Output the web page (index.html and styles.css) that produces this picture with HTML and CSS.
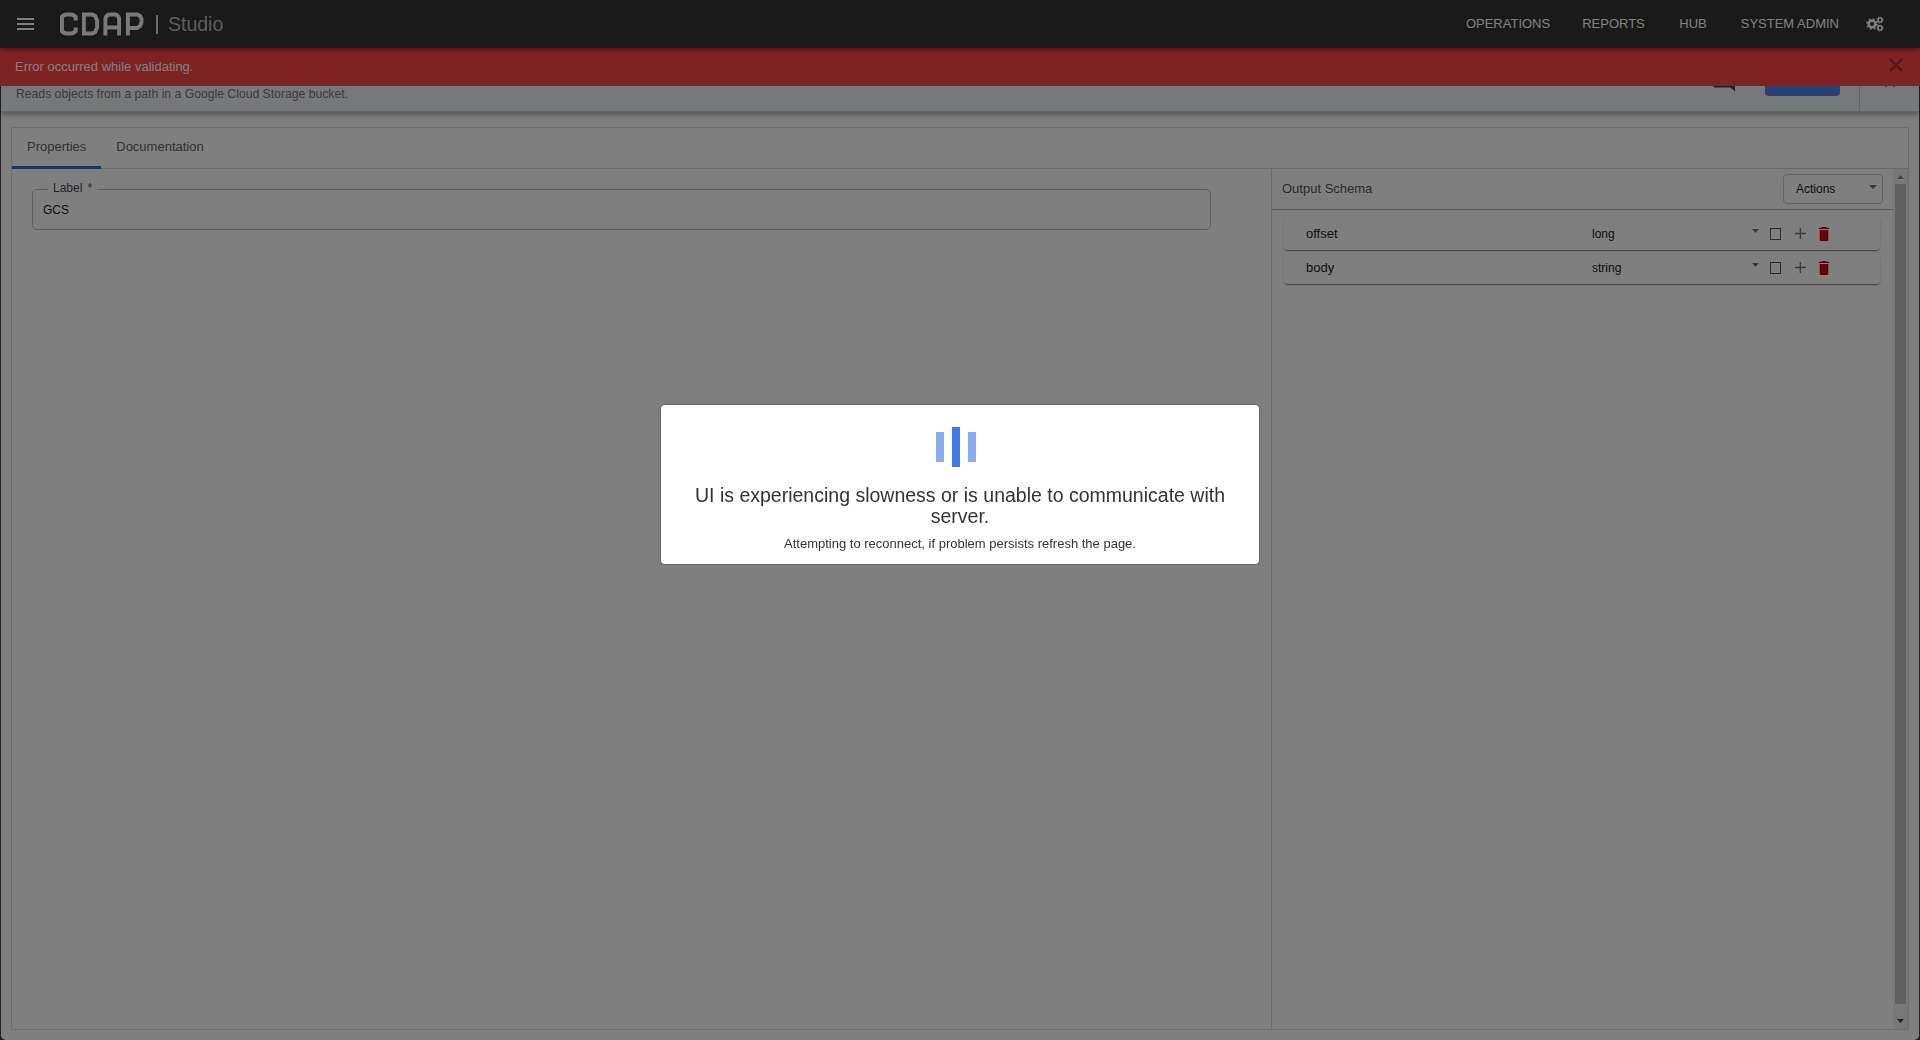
FILE: index.html
```html
<!DOCTYPE html>
<html lang="en">
<head>
<meta charset="utf-8">
<title>CDAP | Studio</title>
<link rel="stylesheet" href="styles.css">
</head>
<body>
<div class="app">
  <header class="topbar">
    <svg class="menu" width="17" height="12" viewBox="0 0 17 12"><path d="M0 0h17v2H0zM0 5h17v2H0zM0 10h17v2H0z"/></svg>
    <svg class="logo" width="84" height="24" viewBox="0 0 86 24" preserveAspectRatio="none" role="img" aria-label="CDAP"><path d="M16 8.500V5Q14 2.500 11 2.500H7Q4 2.500 2 5V19Q4 21.500 7 21.500H11Q14 21.500 16 19V15.500M24.500 2.500H33L36 4L38 9V15L36 20L33 21.500H24.500ZM46.500 23.500V6Q48 2.500 51 2.500H56Q59 2.500 60.500 6V23.500M46.500 15.500H60.500M69.500 23.500V2.500H79L82 4L83.500 7V10L82 14L79 16H69.500"/></svg>
    <span class="bar"></span>
    <span class="product">Studio</span>
    <nav class="nav"><a>OPERATIONS</a><a>REPORTS</a><a>HUB</a><a>SYSTEM ADMIN</a></nav>
    <svg class="cogs" width="18" height="16" viewBox="0 0 18 16">
      <circle cx="6" cy="8" r="3.300" stroke-width="2.400"/><circle cx="6" cy="8" r="5" stroke-width="1.600" stroke-dasharray="1.960 1.967"/>
      <circle cx="14" cy="4" r="1.900" stroke-width="1.400"/><circle cx="14" cy="4" r="3" stroke-width="1.200" stroke-dasharray="1.300 1.056"/>
      <circle cx="14" cy="12" r="1.900" stroke-width="1.400"/><circle cx="14" cy="12" r="3" stroke-width="1.200" stroke-dasharray="1.300 1.056"/>
    </svg>
  </header>
  <div class="alert">
    <span>Error occurred while validating.</span>
    <svg width="14" height="14" viewBox="0 0 14 14"><path d="M1 1L13 13M13 1L1 13"/></svg>
  </div>
  <main class="panel">
    <div class="panel-head">
      <p>Reads objects from a path in a Google Cloud Storage bucket.</p>
      <svg class="comment" width="22" height="6" viewBox="0 0 22 6"><path d="M0 0H22V5.500L17.500 1.500H1.500Z"/></svg>
      <span class="validate"></span>
      <span class="close"><svg width="10" height="2" viewBox="0 0 10 2"><path d="M0 0h2l-1.500 1H0zM8 0h2v1h-.5z"/></svg></span>
    </div>
    <div class="content">
      <div class="tabs"><span class="tab active">Properties</span><span class="tab">Documentation</span></div>
      <div class="split">
        <section class="props">
          <fieldset class="field"><legend>Label<span>*</span></legend>GCS</fieldset>
        </section>
        <section class="schema">
          <div class="schema-head"><span>Output Schema</span><span class="select">Actions<i class="caret"></i></span></div>
          <div class="rows">
            <div class="row"><span class="name">offset</span><span class="type">long</span><i class="caret small"></i><i class="check"></i>
              <svg class="plus" width="11" height="11" viewBox="0 0 11 11"><path d="M4.700 0h1.400v4.800H11v1.400H6.100V11H4.700V6.200H0V4.800h4.700z"/></svg>
              <svg class="trash" width="10" height="14" viewBox="0 0 10 14"><path d="M3 0h4l.6.700H10V2H0V.7h2.400zM.7 3h8.600v9.500Q9.300 14 8 14H2Q.7 14 .7 12.500z"/></svg></div>
            <div class="row"><span class="name">body</span><span class="type">string</span><i class="caret small"></i><i class="check"></i>
              <svg class="plus" width="11" height="11" viewBox="0 0 11 11"><path d="M4.700 0h1.400v4.800H11v1.400H6.100V11H4.700V6.200H0V4.800h4.700z"/></svg>
              <svg class="trash" width="10" height="14" viewBox="0 0 10 14"><path d="M3 0h4l.6.700H10V2H0V.7h2.400zM.7 3h8.600v9.500Q9.300 14 8 14H2Q.7 14 .7 12.500z"/></svg></div>
          </div>
        </section>
        <div class="scroll"><i class="up"></i><i class="thumb"></i><i class="down"></i></div>
      </div>
    </div>
  </main>
</div>
<div class="backdrop">
  <div class="modal">
    <div class="loader"><i></i><i></i><i></i></div>
    <h1>UI is experiencing slowness or is unable to communicate with server.</h1>
    <p>Attempting to reconnect, if problem persists refresh the page.</p>
  </div>
</div>
</body>
</html>
```
FILE: styles.css
```css
* { box-sizing: border-box; }
body { margin: 0; overflow: hidden; font: 13px/1.2 "Liberation Sans", Arial, sans-serif; color: #333; background: #444; }
p, h1 { margin: 0; font-weight: 400; }
svg { display: block; flex: none; }
.app { height: 1040px; display: flex; flex-direction: column; }
.topbar { height: 48px; flex: none; display: flex; align-items: center; padding: 0 36px 0 17px; background: #353535; color: #fff; z-index: 3; box-shadow: 0 2px 4px rgba(0,0,0,.4); }
.menu { fill: #fff; }
.logo { margin-left: 25.5px; fill: none; stroke: #fff; stroke-width: 4; opacity: .95; }
.bar { width: 2px; height: 19px; margin-left: 12px; background: #d8d8d8; }
.product { margin: 2px 0 0 10.5px; font-size: 19.5px; color: #bbb; }
.nav { display: flex; gap: 32px; margin-left: auto; color: #fff; }
.nav a:nth-child(3) { margin-left: 2.5px; }
.nav a:last-child { margin-left: 2px; }
.cogs { margin-left: 27px; fill: none; stroke: #fff; }
.alert { height: 38px; flex: none; display: flex; justify-content: space-between; padding: 10px 17px 0 15px; line-height: 17px; background: #fc4447; color: #fff; z-index: 2; }
.alert svg { fill: none; stroke: #942829; stroke-width: 1.8; }
.panel { flex: 1; margin: 0 1px 1px; display: flex; flex-direction: column; background: #fff; border-radius: 0 0 5px 5px; }
.panel-head { height: 26px; flex: none; display: flex; padding-left: 15px; background: #eff1f4; border-bottom: 1px solid #ccc; box-shadow: 0 2px 6px rgba(0,0,0,.4); color: #777; }
.panel-head p { flex: 1; font-size: 12.2px; line-height: 17px; }
.comment { fill: #40404c; margin-right: 30px; }
.validate { width: 75px; height: 10px; margin-right: 19px; background: #5681e6; border-radius: 0 0 4px 4px; }
.close { width: 60px; border-left: 1px solid #ccc; padding-left: 25px; }
.close svg { fill: #444; }
.content { flex: 1; margin: 15px 10px 10px; border: 1px solid #dcdce2; display: flex; flex-direction: column; }
.tabs { height: 41px; flex: none; display: flex; border-bottom: 1px solid #d5d5dc; }
.tab { height: 41px; padding: 0 15px; line-height: 37px; color: #666; border-bottom: 3px solid transparent; }
.active { border-color: #3367d6; }
.split { flex: 1; display: flex; }
.props { flex: 1; padding: 12px 60px 0 20px; }
.field { height: 49px; margin: 0; padding: 5px 10px 0; border: 1px solid #bbb; border-radius: 5px; font-size: 12px; line-height: 14px; color: #222; }
.field legend { padding: 0 5px 2px; margin-left: 5px; color: #494958; line-height: 15px; }
.field legend span { margin-left: 5px; }
.schema { width: 622px; border-left: 1px solid #d5d5dc; }
.schema-head { height: 41px; display: flex; align-items: center; justify-content: space-between; padding: 0 10px; border-bottom: 1px solid #b8b8b8; color: #555563; }
.select { width: 100px; height: 30px; display: flex; justify-content: space-between; padding: 0 5px 0 12px; border: 1px solid #c8c8c8; border-radius: 4px; font-size: 12px; line-height: 28px; color: #222; }
.caret { width: 8px; height: 4px; margin-top: 10px; background: #737373; clip-path: polygon(0 0, 100% 0, 50% 100%); }
.rows { padding: 8px 13px 0 12px; display: flex; flex-direction: column; gap: 2px; }
.row { height: 32px; display: flex; align-items: center; padding: 0 51px 0 22px; border-radius: 4px; box-shadow: 0 2px 1px -1px rgba(0,0,0,.3), 0 1px 2px rgba(0,0,0,.24); color: #222; }
.name { width: 286px; }
.type { flex: 1; font-size: 12px; }
.small { width: 7px; margin: -6px 11px 0 0; }
.check { width: 11px; height: 12px; border: 1px solid #555; margin: -1px 14px 0 0; }
.plus { fill: #777; margin: -1px 13px 0 0; }
.trash { fill: #d40000; margin-top: -1px; }
.scroll { width: 15px; padding: 6px 2px; display: flex; flex-direction: column; align-items: center; background: #f1f1f1; }
.up, .down { width: 7px; height: 4px; background: #888; clip-path: polygon(50% 0, 100% 100%, 0 100%); }
.thumb { width: 11px; height: 820px; margin-top: 5px; background: #c1c1c1; }
.down { margin-top: 15px; background: #484848; clip-path: polygon(0 0, 100% 0, 50% 100%); }
.backdrop { position: fixed; inset: 0; z-index: 10; background: rgba(0,0,0,.5); display: flex; justify-content: center; align-items: flex-start; padding-top: 404px; }
.modal { width: 600px; height: 161px; padding: 22px 20px 0; border: 1px solid rgba(0,0,0,.2); border-radius: 5px; background: #fff; background-clip: padding-box; text-align: center; }
.loader { height: 40px; display: flex; gap: 8px; align-items: center; padding-left: 255px; }
.loader i { width: 8px; height: 30px; background: #8aadf0; }
.loader i:nth-child(2) { height: 40px; background: #3f78e8; }
.modal h1 { margin-top: 17.5px; font-size: 19.5px; line-height: 21.4px; }
.modal p { margin-top: 9px; }
```
